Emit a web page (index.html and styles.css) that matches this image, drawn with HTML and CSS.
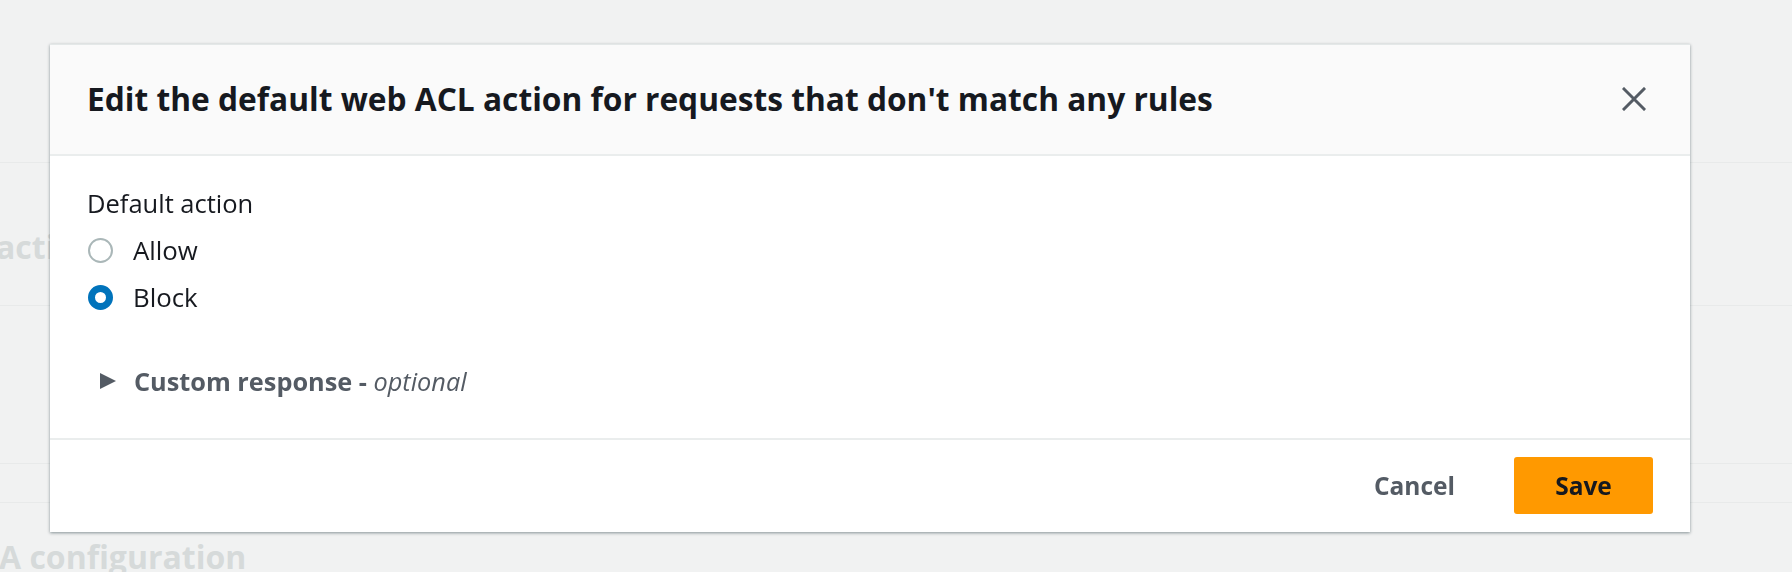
FILE: index.html
```html
<!DOCTYPE html>
<html lang="en">
<head>
<meta charset="utf-8">
<title>Edit default action</title>
<link rel="stylesheet" href="styles.css">
</head>
<body>
<div class="page">
  <div class="page-row row-top"></div>
  <div class="page-row row-mid"><span class="page-heading">action</span></div>
  <div class="page-row row-low"></div>
  <div class="page-row row-thin"></div>
  <div class="page-heading bottom-heading">A configuration</div>
</div>

<div class="modal" role="dialog">
  <div class="modal-header">
    <h2 class="modal-title">Edit the default web ACL action for requests that don't match any rules</h2>
    <button class="close-btn" aria-label="Close">
      <svg width="24" height="24" viewBox="0 0 24 24"><path d="M2 2 L22 22 M22 2 L2 22" stroke="#545b64" stroke-width="3" fill="none" stroke-linecap="square"/></svg>
    </button>
  </div>
  <div class="modal-body">
    <div class="field-label">Default action</div>
    <div class="radio-group">
      <label class="radio-row"><span class="radio"></span><span class="radio-text">Allow</span></label>
      <label class="radio-row"><span class="radio checked"></span><span class="radio-text">Block</span></label>
    </div>
    <div class="expander">
      <span class="caret"></span>
      <span class="expander-text">Custom response - <em>optional</em></span>
    </div>
  </div>
  <div class="modal-footer">
    <button class="btn btn-link">Cancel</button>
    <button class="btn btn-primary">Save</button>
  </div>
</div>
</body>
</html>
```

FILE: styles.css
```css
html, body {
  margin: 0;
  padding: 0;
}
body {
  background: #f1f2f2;
  font-family: "Open Sans", "Noto Sans", sans-serif;
  color: #16191f;
  width: 1792px;
  height: 572px;
  overflow: hidden;
}
.page {
  display: flex;
  flex-direction: column;
}
.page-row {
  border-bottom: 1px solid #e8eaea;
  box-sizing: border-box;
}
.row-top { height: 163px; }
.row-mid {
  height: 143px;
  display: flex;
  align-items: flex-start;
  padding-top: 64px;
}
.row-low { height: 158px; }
.row-thin { height: 39px; }
.page-heading {
  font-weight: 700;
  font-size: 32px;
  line-height: 40px;
  color: #d6dada;
  white-space: nowrap;
}
.row-mid .page-heading {
  margin-left: -4px;
}
.bottom-heading {
  margin-top: 34px;
  margin-left: -1px;
}

.modal {
  position: fixed;
  left: 50px;
  top: 44px;
  width: 1640px;
  background: #ffffff;
  box-shadow: 0 1px 3px 0 rgba(0, 28, 36, 0.45);
  border-top: 1px solid #e4e8e8;
  box-sizing: border-box;
}
.modal-header {
  height: 111px;
  box-sizing: border-box;
  background: #fafafa;
  border-bottom: 2px solid #eaeded;
  display: flex;
  align-items: center;
  justify-content: space-between;
  padding: 0 44px 1px 37px;
}
.modal-title {
  margin: 0;
  font-size: 31.7px;
  line-height: 40px;
  font-weight: 700;
  color: #16191f;
}
.close-btn {
  border: 0;
  background: transparent;
  padding: 0;
  margin: 0;
  width: 24px;
  height: 24px;
  display: flex;
}
.modal-body {
  padding: 29px 38px 39px 38px;
  display: flex;
  flex-direction: column;
}
.field-label {
  font-size: 25.5px;
  line-height: 36px;
  margin-left: -1px;
}
.radio-group {
  display: flex;
  flex-direction: column;
  gap: 11px;
  margin-top: 11px;
}
.radio-row {
  display: flex;
  align-items: center;
  gap: 20px;
  height: 36px;
}
.radio {
  width: 25px;
  height: 25px;
  box-sizing: border-box;
  border-radius: 50%;
  border: 2px solid #aab7b8;
  background: #fff;
  flex: none;
}
.radio.checked {
  border: 7px solid #0073bb;
}
.radio-text {
  font-size: 25.8px;
  line-height: 36px;
}
.expander {
  margin-top: 48px;
  display: flex;
  align-items: center;
  height: 36px;
  padding-left: 12px;
  gap: 18px;
}
.caret {
  width: 0;
  height: 0;
  border-top: 8.5px solid transparent;
  border-bottom: 8.5px solid transparent;
  border-left: 16px solid #545b64;
  flex: none;
}
.expander-text {
  font-size: 25.3px;
  line-height: 36px;
  font-weight: 700;
  color: #545b64;
}
.expander-text em {
  font-weight: 400;
  font-style: italic;
}
.modal-footer {
  border-top: 2px solid #eaeded;
  padding: 17px 37px 18px 37px;
  display: flex;
  justify-content: flex-end;
  align-items: center;
  gap: 19px;
}
.btn {
  font-family: "Open Sans", "Noto Sans", sans-serif;
  font-size: 24.5px;
  font-weight: 700;
  height: 57px;
  border: 0;
  border-radius: 3px;
  padding: 0 40px;
  cursor: pointer;
}
.btn-link {
  background: transparent;
  color: #545b64;
}
.btn-primary {
  background: #ff9900;
  color: #16191f;
  width: 139px;
  padding: 0;
}
```
